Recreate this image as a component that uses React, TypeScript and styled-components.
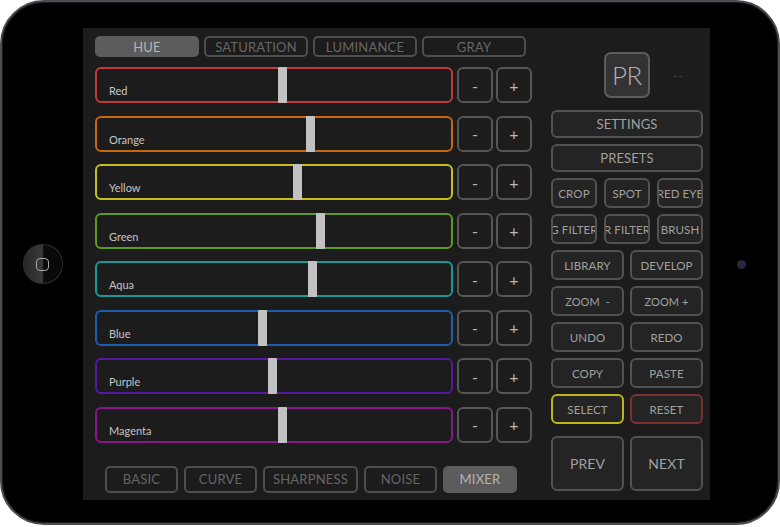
import React from 'react';
import styled, { createGlobalStyle, css } from 'styled-components';

const GlobalStyle = createGlobalStyle`
  html, body {
    margin: 0;
    padding: 0;
    background: #ffffff;
  }
  body {
    font-family: Lato, "Open Sans", "Liberation Sans", sans-serif;
  }
  * {
    box-sizing: border-box;
  }
`;

const Device = styled.div`
  width: 780px;
  height: 525px;
  border-radius: 44px;
  border: 2px solid #4a4d52;
  box-shadow: inset 0 0 0 1px #1a1b1d;
  background: #000;
  display: flex;
  align-items: flex-start;
  padding-top: 26px;
`;

const SideBezel = styled.div<{ $width: number; $pad?: number }>`
  width: ${(p) => p.$width}px;
  height: 472px;
  display: flex;
  align-items: center;
  justify-content: ${(p) => (p.$pad ? 'flex-start' : 'center')};
  padding-left: ${(p) => p.$pad || 0}px;
  flex-shrink: 0;
`;

const HomeButton = styled.div`
  width: 40px;
  height: 40px;
  border-radius: 50%;
  background: linear-gradient(90deg, #262628 0%, #3a3a3c 48%, #0c0c0c 52%, #070707 100%);
  box-shadow: inset 0 0 0 1px #2c2c2e;
  display: flex;
  align-items: center;
  justify-content: center;
`;

const HomeSquare = styled.div`
  width: 13px;
  height: 13px;
  border-radius: 4px;
  border: 1.5px solid #a8a8a8;
`;

const Camera = styled.div`
  width: 9px;
  height: 9px;
  border-radius: 50%;
  background: radial-gradient(circle at 50% 50%, #1d2a55 0%, #1d2a55 30%, #2a2a2c 45%, #2c2c2e 100%);
`;

const Screen = styled.div`
  width: 627px;
  height: 472px;
  flex-shrink: 0;
  background: #1c1c1c;
  display: grid;
  grid-template-columns: 437px 152px;
  column-gap: 19px;
  padding: 8px 0 0 12px;
`;

const LeftColumn = styled.div`
  display: flex;
  flex-direction: column;
`;

const TabRow = styled.div`
  display: flex;
  gap: 5px;
  width: 431px;
  height: 21px;
`;

const tabBase = css<{ $active?: boolean }>`
  border-radius: 5px;
  border: 2px solid ${(p) => (p.$active ? '#5c5c5c' : '#4e4e4e')};
  background: ${(p) => (p.$active ? '#5c5c5c' : 'transparent')};
  color: ${(p) => (p.$active ? '#b4b4b4' : '#666666')};
  display: flex;
  align-items: center;
  justify-content: center;
  letter-spacing: 0.2px;
`;

const TopTab = styled.div<{ $active?: boolean }>`
  ${tabBase};
  flex: 1;
  font-size: 13px;
`;

const SliderList = styled.div`
  display: flex;
  flex-direction: column;
  gap: 12.5px;
  margin-top: 10px;
`;

const SliderRow = styled.div`
  display: flex;
  height: 36px;
  gap: 3px;
`;

const SliderBox = styled.div<{ $color: string }>`
  position: relative;
  flex-shrink: 0;
  width: 358px;
  height: 36px;
  border: 2px solid ${(p) => p.$color};
  border-radius: 6px;
  margin-right: 1px;
  display: flex;
  align-items: flex-end;
  padding: 0 0 4px 12px;
`;

const SliderLabel = styled.span`
  font-size: 11px;
  color: #c4c4c4;
`;

const Thumb = styled.div`
  position: absolute;
  top: -2px;
  bottom: -2px;
  width: 9px;
  background: #c2c2c2;
  border-radius: 1px;
`;

const StepButton = styled.div`
  flex-shrink: 0;
  width: 36px;
  height: 36px;
  border: 2px solid #565656;
  border-radius: 6px;
  color: #b8b8b8;
  font-size: 16px;
  display: flex;
  align-items: center;
  justify-content: center;
`;

const BottomTabs = styled.div`
  display: flex;
  gap: 6px;
  margin-top: 23px;
  margin-left: 10px;
  height: 27px;
`;

const BottomTab = styled.div<{ $active?: boolean; $w: number }>`
  ${tabBase};
  width: ${(p) => p.$w}px;
  font-size: 13px;
`;

const RightColumn = styled.div`
  display: flex;
  flex-direction: column;
  padding-top: 16px;
`;

const LogoRow = styled.div`
  position: relative;
  display: flex;
  justify-content: center;
  height: 46px;
  margin-bottom: 12px;
`;

const Logo = styled.div`
  width: 46px;
  height: 46px;
  border-radius: 7px;
  border: 2px solid #5c5c5c;
  background: #333333;
  color: #b0b0b0;
  font-size: 26px;
  font-weight: 300;
  display: flex;
  align-items: center;
  justify-content: center;
  letter-spacing: -0.5px;
`;

const Dashes = styled.span`
  position: absolute;
  right: 20px;
  top: 17px;
  font-size: 10px;
  color: #555555;
  letter-spacing: 1px;
`;

const ButtonGrid = styled.div`
  display: grid;
  gap: 6px;
`;

const Row = styled.div<{ $cols: number; $gap: number }>`
  display: grid;
  grid-template-columns: repeat(${(p) => p.$cols}, 1fr);
  column-gap: ${(p) => p.$gap}px;
`;

const PanelButton = styled.div<{ $h: number; $size: number; $border?: string }>`
  height: ${(p) => p.$h}px;
  border: 2px solid ${(p) => p.$border || '#525252'};
  border-radius: 6px;
  background: #242424;
  color: #a0a0a0;
  font-size: ${(p) => p.$size}px;
  display: flex;
  align-items: center;
  justify-content: center;
  white-space: nowrap;
  overflow: hidden;
  letter-spacing: 0.1px;
`;

const NavRow = styled(Row)`
  margin-top: 12px;
`;

const sliders = [
  { name: 'Red', color: '#c3393c', pos: 181 },
  { name: 'Orange', color: '#c9660e', pos: 209 },
  { name: 'Yellow', color: '#c6c01c', pos: 196 },
  { name: 'Green', color: '#5d9a1e', pos: 219 },
  { name: 'Aqua', color: '#179a97', pos: 211 },
  { name: 'Blue', color: '#1b5eae', pos: 161 },
  { name: 'Purple', color: '#5618a0', pos: 171 },
  { name: 'Magenta', color: '#88178a', pos: 181 },
];

const bottomTabs = [
  { label: 'BASIC', w: 73 },
  { label: 'CURVE', w: 73 },
  { label: 'SHARPNESS', w: 95 },
  { label: 'NOISE', w: 73 },
  { label: 'MIXER', w: 74, active: true },
];

export default function App() {
  return (
    <>
      <GlobalStyle />
      <Device>
        <SideBezel $width={81}>
          <HomeButton>
            <HomeSquare />
          </HomeButton>
        </SideBezel>
        <Screen>
          <LeftColumn>
            <TabRow>
              <TopTab $active>HUE</TopTab>
              <TopTab>SATURATION</TopTab>
              <TopTab>LUMINANCE</TopTab>
              <TopTab>GRAY</TopTab>
            </TabRow>
            <SliderList>
              {sliders.map((s) => (
                <SliderRow key={s.name}>
                  <SliderBox $color={s.color}>
                    <SliderLabel>{s.name}</SliderLabel>
                    <Thumb style={{ left: s.pos }} />
                  </SliderBox>
                  <StepButton>-</StepButton>
                  <StepButton>+</StepButton>
                </SliderRow>
              ))}
            </SliderList>
            <BottomTabs>
              {bottomTabs.map((t) => (
                <BottomTab key={t.label} $w={t.w} $active={t.active}>
                  {t.label}
                </BottomTab>
              ))}
            </BottomTabs>
          </LeftColumn>
          <RightColumn>
            <LogoRow>
              <Logo>PR</Logo>
              <Dashes>--</Dashes>
            </LogoRow>
            <ButtonGrid>
              <PanelButton $h={28} $size={13}>SETTINGS</PanelButton>
              <PanelButton $h={28} $size={13}>PRESETS</PanelButton>
              <Row $cols={3} $gap={7}>
                <PanelButton $h={30} $size={11.5}>CROP</PanelButton>
                <PanelButton $h={30} $size={11.5}>SPOT</PanelButton>
                <PanelButton $h={30} $size={11.5}>RED EYE</PanelButton>
              </Row>
              <Row $cols={3} $gap={7}>
                <PanelButton $h={30} $size={11.5}>G FILTER</PanelButton>
                <PanelButton $h={30} $size={11.5}>R FILTER</PanelButton>
                <PanelButton $h={30} $size={11.5}>BRUSH</PanelButton>
              </Row>
              <Row $cols={2} $gap={6}>
                <PanelButton $h={30} $size={11.5}>LIBRARY</PanelButton>
                <PanelButton $h={30} $size={11.5}>DEVELOP</PanelButton>
              </Row>
              <Row $cols={2} $gap={6}>
                <PanelButton $h={30} $size={11}>ZOOM&nbsp;&nbsp;-</PanelButton>
                <PanelButton $h={30} $size={11}>ZOOM +</PanelButton>
              </Row>
              <Row $cols={2} $gap={6}>
                <PanelButton $h={30} $size={11.5}>UNDO</PanelButton>
                <PanelButton $h={30} $size={11.5}>REDO</PanelButton>
              </Row>
              <Row $cols={2} $gap={6}>
                <PanelButton $h={30} $size={11.5}>COPY</PanelButton>
                <PanelButton $h={30} $size={11.5}>PASTE</PanelButton>
              </Row>
              <Row $cols={2} $gap={6}>
                <PanelButton $h={30} $size={11.5} $border="#bdb51c">SELECT</PanelButton>
                <PanelButton $h={30} $size={11.5} $border="#7e2f2f">RESET</PanelButton>
              </Row>
            </ButtonGrid>
            <NavRow $cols={2} $gap={6}>
              <PanelButton $h={55} $size={14}>PREV</PanelButton>
              <PanelButton $h={55} $size={14}>NEXT</PanelButton>
            </NavRow>
          </RightColumn>
        </Screen>
        <SideBezel $width={68} $pad={27}>
          <Camera />
        </SideBezel>
      </Device>
    </>
  );
}
